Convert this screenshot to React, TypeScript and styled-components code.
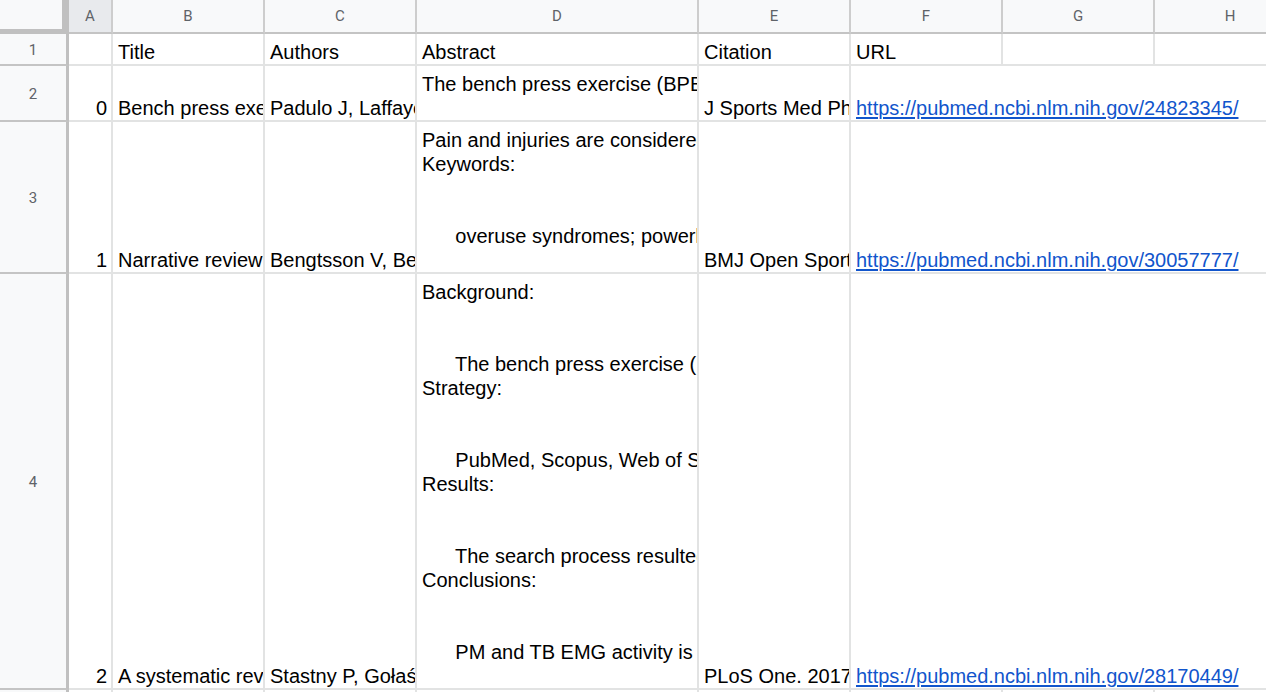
import React from "react";
import styled, { createGlobalStyle } from "styled-components";

const GlobalStyle = createGlobalStyle`
  *, *::before, *::after { box-sizing: border-box; }
  html, body { margin: 0; padding: 0; background: #ffffff; overflow: hidden; }
  body { width: 1266px; height: 692px; }
`;

const Sheet = styled.div`
  display: grid;
  grid-template-columns: 69px 44px 152px 152px 282px 152px 152px 152px 152px;
  grid-template-rows: 34px 32px 56px 152px 416px 32px;
  width: max-content;
  font-family: "Liberation Sans", Arial, sans-serif;
`;

const Corner = styled.div`
  background: #f8f9fa;
  border-right: 7px solid #c0c0c0;
  border-bottom: 5px solid #c0c0c0;
`;

const ColHeader = styled.div<{ $active?: boolean }>`
  display: flex;
  align-items: center;
  justify-content: center;
  background: ${(p) => (p.$active ? "#e8eaed" : "#f8f9fa")};
  border-right: 2px solid #cdcdcd;
  border-bottom: 2px solid #c4c4c4;
  color: #5f6368;
  font-family: Roboto, "Liberation Sans", sans-serif;
  font-size: 15px;
  padding-bottom: 1px;
`;

const RowHeader = styled.div`
  display: flex;
  align-items: center;
  justify-content: center;
  background: #f8f9fa;
  border-right: 3px solid #c0c0c0;
  border-bottom: 2px solid #c4c4c4;
  color: #5f6368;
  font-family: Roboto, "Liberation Sans", sans-serif;
  font-size: 15px;
  padding-top: 2px;
`;

const Cell = styled.div<{ $align?: "left" | "right"; $span?: number }>`
  display: flex;
  flex-direction: column;
  justify-content: flex-end;
  min-width: 0;
  overflow: hidden;
  grid-column: span ${(p) => p.$span ?? 1};
  padding: 0 ${(p) => (p.$align === "right" ? "4px" : "5px")} 0 5px;
  border-right: 2px solid #e2e3e3;
  border-bottom: 2px solid #e2e3e3;
  text-align: ${(p) => p.$align ?? "left"};
  color: #000000;
  font-size: 20px;
  line-height: 24px;
  white-space: pre;
`;

const Line = styled.div`
  height: 24px;
`;

const Link = styled.a`
  color: #1155cc;
  text-decoration: underline;
  text-underline-offset: 2px;
`;

type Row = {
  num: number;
  index: string;
  title: string;
  authors: string;
  abstract: string[];
  citation: string;
  url: string;
};

const columns = ["A", "B", "C", "D", "E", "F", "G", "H"];

const rows: Row[] = [
  {
    num: 2,
    index: "0",
    title: "Bench press exercise: the key points",
    authors: "Padulo J, Laffaye G, Chaouachi A, Chamari K.",
    abstract: [
      "The bench press exercise (BPE) is receiving increasing interest as a field testing, training/therapeutic modality.",
      "",
    ],
    citation: "J Sports Med Phys Fitness. 2015 Jun;55(6):604-8.",
    url: "https://pubmed.ncbi.nlm.nih.gov/24823345/",
  },
  {
    num: 3,
    index: "1",
    title: "Narrative review of injuries in powerlifting with special reference to their association to the squat, bench press and deadlift",
    authors: "Bengtsson V, Berglund L, Aasa U.",
    abstract: [
      "Pain and injuries are considered to be common in powerlifting.",
      "Keywords:",
      "",
      "",
      "      overuse syndromes; powerlifting; strength training",
      "",
    ],
    citation: "BMJ Open Sport Exerc Med. 2018 Jul 10;4(1):e000382.",
    url: "https://pubmed.ncbi.nlm.nih.gov/30057777/",
  },
  {
    num: 4,
    index: "2",
    title: "A systematic review of surface electromyography analyses of the bench press movement task",
    authors: "Stastny P, Gołaś A, Blazek D, Maszczyk A, Wilk M.",
    abstract: [
      "Background:",
      "",
      "",
      "      The bench press exercise (BPE) is receiving increasing interest as a field testing.",
      "Strategy:",
      "",
      "",
      "      PubMed, Scopus, Web of Science, and SPORTDiscus databases were searched.",
      "Results:",
      "",
      "",
      "      The search process resulted in 14 eligible studies.",
      "Conclusions:",
      "",
      "",
      "      PM and TB EMG activity is increased with increasing load.",
      "",
    ],
    citation: "PLoS One. 2017 Feb 7;12(2):e0171632.",
    url: "https://pubmed.ncbi.nlm.nih.gov/28170449/",
  },
];

export default function App() {
  return (
    <>
      <GlobalStyle />
      <Sheet>
        <Corner />
        {columns.map((c) => (
          <ColHeader key={c} $active={c === "A"}>
            {c}
          </ColHeader>
        ))}

        <RowHeader>1</RowHeader>
        <Cell />
        <Cell>Title</Cell>
        <Cell>Authors</Cell>
        <Cell>Abstract</Cell>
        <Cell>Citation</Cell>
        <Cell>URL</Cell>
        <Cell />
        <Cell />

        {rows.map((r) => (
          <React.Fragment key={r.num}>
            <RowHeader>{r.num}</RowHeader>
            <Cell $align="right">{r.index}</Cell>
            <Cell>{r.title}</Cell>
            <Cell>{r.authors}</Cell>
            <Cell>
              {r.abstract.map((line, i) => (
                <Line key={i}>{line}</Line>
              ))}
            </Cell>
            <Cell>{r.citation}</Cell>
            <Cell $span={3}>
              <div>
                <Link href={r.url}>{r.url}</Link>
              </div>
            </Cell>
          </React.Fragment>
        ))}

        <RowHeader>5</RowHeader>
        {columns.map((c) => (
          <Cell key={c} />
        ))}
      </Sheet>
    </>
  );
}
